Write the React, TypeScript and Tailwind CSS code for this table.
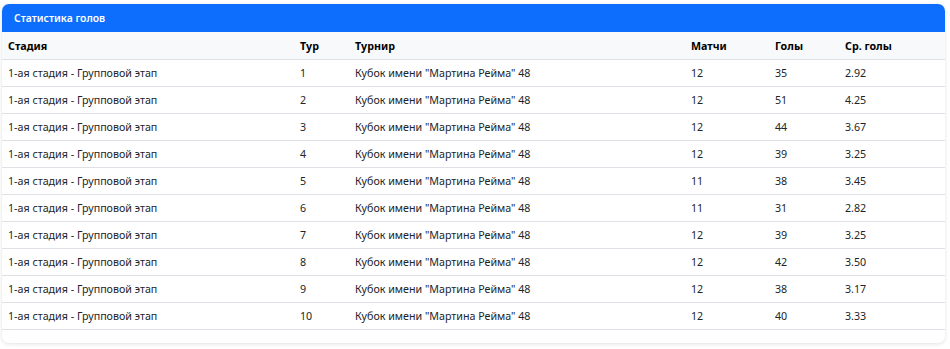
import React from "react";

const rows = [
  [1, 12, 35, "2.92"],
  [2, 12, 51, "4.25"],
  [3, 12, 44, "3.67"],
  [4, 12, 39, "3.25"],
  [5, 11, 38, "3.45"],
  [6, 11, 31, "2.82"],
  [7, 12, 39, "3.25"],
  [8, 12, 42, "3.50"],
  [9, 12, 38, "3.17"],
  [10, 12, 40, "3.33"],
];

export default function App() {
  return (
    <div
      className="bg-white w-[950px] h-[349px] pt-[4px] pl-[2px] pr-[5px]"
      style={{ fontFamily: '"Noto Sans", "Open Sans", sans-serif' }}
    >
      <div className="rounded-[7px] bg-white shadow-[0_1px_4px_rgba(0,0,0,0.12)] overflow-hidden pb-[13px]">
        <div className="h-[28px] bg-[#0d6efd] flex items-center px-[12px] pt-[1px] text-white text-[10.4px] font-semibold">
          Статистика голов
        </div>
        <table className="w-full table-fixed border-collapse text-[10.7px] text-[#212529]">
          <colgroup>
            <col className="w-[292px]" />
            <col className="w-[55px]" />
            <col className="w-[336px]" />
            <col className="w-[84px]" />
            <col className="w-[70px]" />
            <col />
          </colgroup>
          <thead>
            <tr className="h-[27px] bg-[#f8f9fa] border-b border-[#dee2e6]">
              {["Стадия", "Тур", "Турнир", "Матчи", "Голы", "Ср. голы"].map((h) => (
                <th key={h} className="text-left font-bold px-[6px] pt-[2px] text-black">
                  {h}
                </th>
              ))}
            </tr>
          </thead>
          <tbody>
            {rows.map((r) => (
              <tr key={r[0]} className="h-[27px] border-b border-[#dee2e6]">
                <td className="px-[6px] pt-[2px]">1-ая стадия - Групповой этап</td>
                <td className="px-[6px] pt-[2px]">{r[0]}</td>
                <td className="px-[6px] pt-[2px]">Кубок имени "Мартина Рейма" 48</td>
                <td className="px-[6px] pt-[2px]">{r[1]}</td>
                <td className="px-[6px] pt-[2px]">{r[2]}</td>
                <td className="px-[6px] pt-[2px]">{r[3]}</td>
              </tr>
            ))}
          </tbody>
        </table>
      </div>
    </div>
  );
}
